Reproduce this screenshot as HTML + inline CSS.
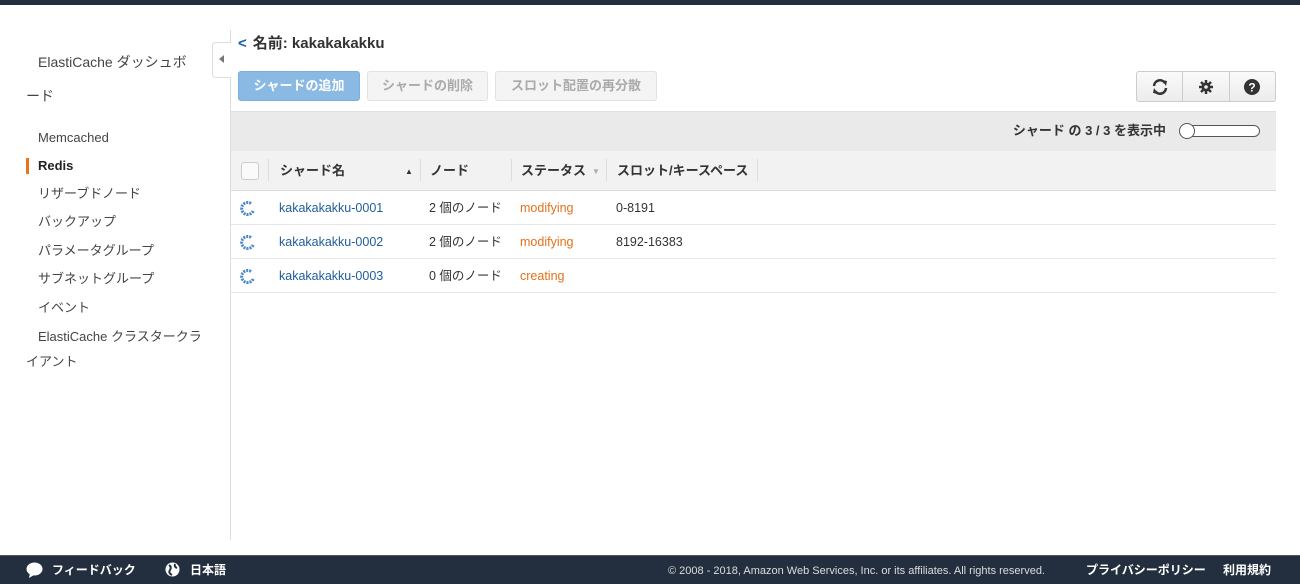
<!DOCTYPE html>
<html><head><meta charset="utf-8"><style>
*{box-sizing:border-box;margin:0;padding:0}
body{width:1300px;height:584px;overflow:hidden;background:#fff;font-family:"Liberation Sans","Noto Sans CJK JP",sans-serif;color:#333;position:relative;line-height:16px}
.top{position:absolute;left:0;top:0;width:1300px;height:5px;background:#232f3e}
.side{position:absolute;left:0;top:30px;width:231px;height:510px;border-right:1px solid #ddd}
.side .t{position:absolute;left:38px;top:23px;font-size:14px;color:#444;line-height:18px;width:175px}
.side .t2{position:absolute;left:26px;top:57px;font-size:14px;color:#444;line-height:18px}
.nav{position:absolute;font-size:13px;color:#444}
.tab{position:absolute;left:212px;top:42px;width:19px;height:36px;border:1px solid #ddd;border-right:none;border-radius:4px 0 0 4px;background:#fff}
.tab:after{content:"";position:absolute;left:6px;top:12px;border:4px solid transparent;border-right:5px solid #777;border-left:none}
.title{position:absolute;left:238px;top:35px;font-size:15px;font-weight:bold;color:#333;line-height:18px}
.title b{color:#1a5ea8;margin-right:6px}
.btn{position:absolute;top:71px;height:30px;border-radius:3px;font-size:13px;font-weight:bold;text-align:center;line-height:28px}
.b1{left:238px;width:122px;background:#8ab9e3;color:#fff;border:1px solid #7dafdc}
.bg{background:#f4f4f4;color:#aaa;border:1px solid #e2e2e2}
.ic{position:absolute;top:71px;left:1136px;width:140px;height:31px;border:1px solid #ccc;border-radius:3px;background:linear-gradient(#fafafa,#ececec);display:flex}
.ic div{flex:1;border-right:1px solid #ccc;display:flex;align-items:center;justify-content:center}
.ic div:last-child{border:none}
.bar{position:absolute;left:231px;top:111px;width:1045px;height:40px;background:#eaeaea;border-top:1px solid #e0e0e0}
.bar span{position:absolute;right:110px;top:11px;font-size:13px;font-weight:bold;color:#333}
.sl{position:absolute;right:16px;top:13px;width:80px;height:12px;border:1px solid #555;border-radius:7px;background:#fff}
.sl:before{content:"";position:absolute;left:-2px;top:-3px;width:14px;height:14px;border:1px solid #555;border-radius:50%;background:#fff}
.hd{position:absolute;left:231px;top:151px;width:1045px;height:40px;background:#f2f2f2;border-bottom:1px solid #ddd;font-size:13px;font-weight:bold;color:#333}
.hd span{position:absolute;top:12px}
.sep{position:absolute;top:8px;width:1px;height:22px;background:#ddd}
.row{position:absolute;left:231px;width:1045px;height:34px;border-bottom:1px solid #e6e6e6;font-size:12.5px}
.row span{position:absolute;top:9px}
.row svg{position:absolute;left:9px;top:9px}
.lnk{color:#1f5c9b}.or{color:#e3711a}
.foot{position:absolute;left:0;top:555px;width:1300px;height:29px;background:#232f3e;color:#fff;font-size:12px;border-top:1px solid #555}
.foot span{position:absolute;top:6px}
.foot svg{position:absolute;top:6px}
</style></head><body>
<div class="top"></div>
<div class="side">
<div class="t">ElastiCache ダッシュボ</div>
<div class="t2">ード</div>
<div class="nav" style="left:38px;top:100px">Memcached</div>
<div style="position:absolute;left:26px;top:128px;width:3px;height:16px;background:#e8731b"></div>
<div class="nav" style="left:38px;top:128px;font-weight:bold;color:#222">Redis</div>
<div class="nav" style="left:38px;top:156px">リザーブドノード</div>
<div class="nav" style="left:38px;top:184px">バックアップ</div>
<div class="nav" style="left:38px;top:213px">パラメータグループ</div>
<div class="nav" style="left:38px;top:241px">サブネットグループ</div>
<div class="nav" style="left:38px;top:270px">イベント</div>
<div class="nav" style="left:38px;top:299px">ElastiCache クラスタークラ</div>
<div class="nav" style="left:26px;top:324px">イアント</div>
</div>
<div class="tab"></div>
<div class="title"><b>&lt;</b>名前: kakakakakku</div>
<div class="btn b1">シャードの追加</div>
<div class="btn bg" style="left:367px;width:121px">シャードの削除</div>
<div class="btn bg" style="left:495px;width:162px">スロット配置の再分散</div>
<div class="ic">
<div><svg width="18" height="18" viewBox="0 0 18 18"><path d="M3 8a6 6 0 0 1 11-3" stroke="#333" stroke-width="2.5" fill="none"/><path d="M15 10a6 6 0 0 1-11 3" stroke="#333" stroke-width="2.5" fill="none"/><path d="M11 2l5 1-1 5z M7 16l-5-1 1-5z" fill="#333"/></svg></div>
<div><svg width="14" height="14" viewBox="0 0 14 14"><circle cx="7" cy="7" r="4.5" fill="#333"/><path d="M7 0v14M0 7h14M2 2l10 10M12 2L2 12" stroke="#333" stroke-width="2.5"/><circle cx="7" cy="7" r="1.8" fill="#eee"/></svg></div>
<div><svg width="16" height="16" viewBox="0 0 16 16"><circle cx="8" cy="8" r="8" fill="#333"/><text x="8" y="12.5" font-size="12" font-weight="bold" fill="#fff" text-anchor="middle" font-family="Liberation Sans">?</text></svg></div>
</div>
<div class="bar"><span>シャード の 3 / 3 を表示中</span><div class="sl"></div></div>
<div class="hd">
<div style="position:absolute;left:10px;top:11px;width:18px;height:18px;border:1px solid #ccc;border-radius:3px;background:#fafafa"></div>
<div class="sep" style="left:37px"></div>
<span style="left:49px">シャード名</span><span style="left:174px;font-size:8px;top:13px">▲</span>
<div class="sep" style="left:189px"></div>
<span style="left:199px">ノード</span>
<div class="sep" style="left:280px"></div>
<span style="left:290px">ステータス</span><span style="left:361px;font-size:8px;top:13px;color:#aaa">▼</span>
<div class="sep" style="left:375px"></div>
<span style="left:386px">スロット/キースペース</span>
<div class="sep" style="left:526px"></div>
</div>
<div class="row" style="top:191px"><svg width="16" height="16" viewBox="0 0 16 16"><path d="M11 3.5A6 6 0 1 0 13.5 10" stroke="#4a86c8" stroke-width="3" fill="none" stroke-dasharray="2 1"/></svg><span class="lnk" style="left:48px">kakakakakku-0001</span><span style="left:198px">2 個のノード</span><span class="or" style="left:289px">modifying</span><span style="left:385px">0-8191</span></div>
<div class="row" style="top:225px"><svg width="16" height="16" viewBox="0 0 16 16"><path d="M11 3.5A6 6 0 1 0 13.5 10" stroke="#4a86c8" stroke-width="3" fill="none" stroke-dasharray="2 1"/></svg><span class="lnk" style="left:48px">kakakakakku-0002</span><span style="left:198px">2 個のノード</span><span class="or" style="left:289px">modifying</span><span style="left:385px">8192-16383</span></div>
<div class="row" style="top:259px"><svg width="16" height="16" viewBox="0 0 16 16"><path d="M11 3.5A6 6 0 1 0 13.5 10" stroke="#4a86c8" stroke-width="3" fill="none" stroke-dasharray="2 1"/></svg><span class="lnk" style="left:48px">kakakakakku-0003</span><span style="left:198px">0 個のノード</span><span class="or" style="left:289px">creating</span></div>
<div class="foot">
<svg style="left:26px" width="17" height="16" viewBox="0 0 17 16"><ellipse cx="8.5" cy="7" rx="8" ry="6.5" fill="#fff"/><path d="M4 11l-1 5 5-3z" fill="#fff"/></svg>
<span style="left:52px;font-weight:bold">フィードバック</span>
<svg style="left:165px" width="15" height="15" viewBox="0 0 15 15"><circle cx="7.5" cy="7.5" r="7" fill="#fff"/><path d="M4 3q3 2 1 5t2 5M10 2q-1 3 2 4" stroke="#232f3e" stroke-width="2" fill="none"/></svg>
<span style="left:190px;font-weight:bold">日本語</span>
<span style="left:668px;font-size:11px;top:7px;color:#ddd">© 2008 - 2018, Amazon Web Services, Inc. or its affiliates. All rights reserved.</span>
<span style="left:1086px;font-weight:bold">プライバシーポリシー</span>
<span style="left:1223px;font-weight:bold">利用規約</span>
</div>
</body></html>
